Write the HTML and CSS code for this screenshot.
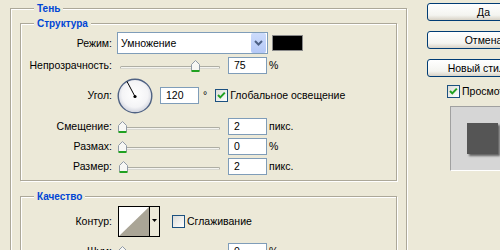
FILE: index.html
```html
<!DOCTYPE html>
<html lang="ru">
<head>
    <meta charset="UTF-8">
    <title>Стиль слоя — Тень</title>
    <link rel="stylesheet" href="styles.css">
</head>
<body>
<div class="dialog">
    <fieldset class="group outer">
        <legend>Тень</legend>

        <!-- Структура -->
        <fieldset class="group inner">
            <legend>Структура</legend>
            <div class="row row-mode">
                <span class="label">Режим:</span>
                <div class="select">
                    <span class="select-text">Умножение</span>
                    <span class="select-btn">
                        <svg width="9" height="6" viewBox="0 0 9 6"><polyline points="1,1 4.5,4.5 8,1" fill="none" stroke="#4d6185" stroke-width="2"/></svg>
                    </span>
                </div>
                <span class="swatch"></span>
            </div>
            <div class="row">
                <span class="label">Непрозрачность:</span>
                <div class="slider"><span class="thumb" style="--value: 75"></span></div>
                <span class="field">75</span>
                <span class="unit">%</span>
            </div>
            <div class="row row-angle">
                <span class="label">Угол:</span>
                <svg class="dial" width="36" height="36" viewBox="0 0 36 36">
                    <defs>
                        <radialGradient id="dialFill" cx="50%" cy="45%" r="55%">
                            <stop offset="0" stop-color="#ffffff"/>
                            <stop offset="0.7" stop-color="#f4f4f6"/>
                            <stop offset="1" stop-color="#cfd2dc"/>
                        </radialGradient>
                    </defs>
                    <circle cx="18" cy="18" r="16.8" fill="url(#dialFill)" stroke="#4f6283" stroke-width="1.4"/>
                    <line x1="18" y1="18.5" x2="10" y2="3.5" stroke="#000" stroke-width="1"/>
                    <circle cx="18" cy="18.5" r="1.6" fill="#000"/>
                </svg>
                <span class="field field-angle">120</span>
                <span class="deg">°</span>
                <label class="check check-global"><span class="box checked"></span>Глобальное освещение</label>
            </div>
            <div class="row">
                <span class="label">Смещение:</span>
                <div class="slider"><span class="thumb" style="--value: 0"></span></div>
                <span class="field">2</span>
                <span class="unit">пикс.</span>
            </div>
            <div class="row">
                <span class="label">Размах:</span>
                <div class="slider"><span class="thumb" style="--value: 0"></span></div>
                <span class="field">0</span>
                <span class="unit">%</span>
            </div>
            <div class="row">
                <span class="label">Размер:</span>
                <div class="slider"><span class="thumb" style="--value: 1"></span></div>
                <span class="field">2</span>
                <span class="unit">пикс.</span>
            </div>
        </fieldset>

        <!-- Качество -->
        <fieldset class="group inner quality">
            <legend>Качество</legend>
            <div class="row row-contour">
                <span class="label">Контур:</span>
                <svg class="contour" width="42" height="31" viewBox="0 0 42 31">
                    <rect x="0.5" y="0.5" width="41" height="30" fill="#ece9d8" stroke="#000"/>
                    <rect x="1" y="1" width="30" height="29" fill="#fff"/>
                    <polygon points="1,30 31,1 31,30" fill="#aaa596"/>
                    <line x1="31.5" y1="1" x2="31.5" y2="30" stroke="#000"/>
                    <polygon points="34,13 39,13 36.5,16" fill="#000"/>
                </svg>
                <label class="check check-smooth"><span class="box"></span>Сглаживание</label>
            </div>
            <div class="row">
                <span class="label">Шум:</span>
                <div class="slider"><span class="thumb" style="--value: 0"></span></div>
                <span class="field">0</span>
                <span class="unit">%</span>
            </div>
        </fieldset>
    </fieldset>

    <div class="side">
        <button class="btn">Да</button>
        <button class="btn">Отмена</button>
        <button class="btn">Новый стиль...</button>
        <label class="check check-preview"><span class="box checked"></span>Просмотр</label>
        <div class="preview"><span class="preview-square"></span></div>
    </div>
</div>
</body>
</html>
```

FILE: styles.css
```css
body {
    margin: 0;
    background: #ece9d8;
    font-family: "Liberation Sans", Arial, sans-serif;
    font-size: 10.5px;
    line-height: 13px;
    color: #000;
    overflow: hidden;
}

.dialog {
    display: flex;
    align-items: flex-start;
    padding: 2px 0 0 10px;
}

/* etched group boxes */
.group {
    margin: 0;
    border: 1px solid #aca899;
    box-shadow: inset 1px 1px 0 #fff, 1px 1px 0 #fff;
    min-width: 0;
    box-sizing: border-box;
}

.group legend {
    padding: 0 3px;
    margin-left: 13px;
    line-height: 13px;
    font-size: 10px;
    font-weight: bold;
    color: #0046d5;
    background: #ece9d8;
}

.outer {
    flex: none;
    width: 397px;
    height: 300px;
    padding: 2px 9px 0;
}

.outer > legend {
    margin-left: 14px;
}

.inner {
    padding: 1px 0 4px;
}

.quality {
    margin-top: 9px;
    padding-top: 3px;
}

/* rows */
.row {
    display: flex;
    align-items: center;
    height: 20px;
}

.row-mode {
    height: 24px;
}

.row-angle {
    height: 41px;
}

.row-contour {
    height: 31px;
    margin-bottom: 4px;
}

.label {
    flex: none;
    width: 91px;
    margin-right: 5px;
    text-align: right;
}

/* select */
.select {
    display: flex;
    align-items: center;
    width: 151px;
    height: 22px;
    box-sizing: border-box;
    border: 1px solid #7f9db9;
    background: #fff;
    padding: 1px 1px 1px 1px;
}

.select-text {
    flex: 1;
    padding-left: 2px;
}

.select-btn {
    display: flex;
    align-items: center;
    justify-content: center;
    width: 15px;
    height: 20px;
    border-radius: 2px;
    background: linear-gradient(#cddcfc, #b4c8f6);
}

.swatch {
    width: 31px;
    height: 16px;
    margin-left: 4px;
    box-sizing: border-box;
    border: 1px solid #8a8a8a;
    background: #000;
}

/* sliders */
.slider {
    position: relative;
    flex: none;
    width: 106px;
    height: 12px;
    margin: 2px 4px 0 1px;
}

.slider::before {
    content: "";
    position: absolute;
    left: 2px;
    right: 4px;
    top: 6px;
    height: 1px;
    border: 1px solid #aeaea4;
    border-bottom-color: #d8d8d0;
    border-radius: 2px;
    background: #f4f4f0;
}

.thumb {
    position: absolute;
    top: 0;
    left: calc(var(--value) * 0.97px);
    width: 9px;
    height: 12px;
    background: url("data:image/svg+xml,%3Csvg xmlns='http://www.w3.org/2000/svg' width='9' height='12'%3E%3Cpath d='M0.5 10.5V4.5L4.5 0.5L8.5 4.5V10.5Z' fill='%23f7f7f4' stroke='%23909aa6'/%3E%3Crect x='0.5' y='10' width='8' height='2' fill='%2321a121'/%3E%3C/svg%3E") no-repeat;
}

/* inputs */
.field {
    flex: none;
    width: 39px;
    height: 17px;
    box-sizing: border-box;
    border: 1px solid #7f9db9;
    background: #fff;
    padding-left: 5px;
    line-height: 15px;
}

.field-angle {
    margin-left: 7px;
}

.unit {
    margin-left: 2px;
}

.deg {
    margin-left: 4px;
}

/* checkboxes */
.check {
    display: flex;
    align-items: center;
}

.box {
    width: 13px;
    height: 13px;
    margin-right: 2px;
    box-sizing: border-box;
    border: 1px solid #1c5180;
    background: linear-gradient(135deg, #dcdcd7, #fff);
}

.box.checked {
    background: url("data:image/svg+xml,%3Csvg xmlns='http://www.w3.org/2000/svg' width='11' height='11'%3E%3Cpath d='M2 5L4.3 7.4L8.8 2.6' fill='none' stroke='%2321a121' stroke-width='2'/%3E%3C/svg%3E") no-repeat, linear-gradient(135deg, #dcdcd7, #fff);
}

.check-global {
    margin-left: 8px;
}

.contour {
    margin-left: 1px;
}

.check-smooth {
    margin-left: 12px;
}

/* right column */
.side {
    flex: none;
    display: flex;
    flex-direction: column;
    gap: 10px;
    width: 113px;
    margin-left: 20px;
    padding-top: 1px;
}

.btn {
    width: 113px;
    height: 18px;
    padding: 0;
    border: 1px solid #003c74;
    border-radius: 3px;
    background: linear-gradient(#fff, #f4f4f0 70%, #d8d2c6);
    font-family: inherit;
    font-size: inherit;
    color: #000;
}

.check-preview {
    margin: -2px 0 0 20px;
}

.preview {
    display: flex;
    align-items: center;
    justify-content: center;
    width: 65px;
    height: 65px;
    margin: -2px 0 0 23px;
    box-sizing: border-box;
    border: 1px solid #fff;
    border-top-color: #a0a0a0;
    border-left-color: #a0a0a0;
    background: #d6d6d6;
}

.preview-square {
    width: 31px;
    height: 31px;
    background: #555;
    box-shadow: 2px 2px 2px rgba(0, 0, 0, 0.55);
}
```
